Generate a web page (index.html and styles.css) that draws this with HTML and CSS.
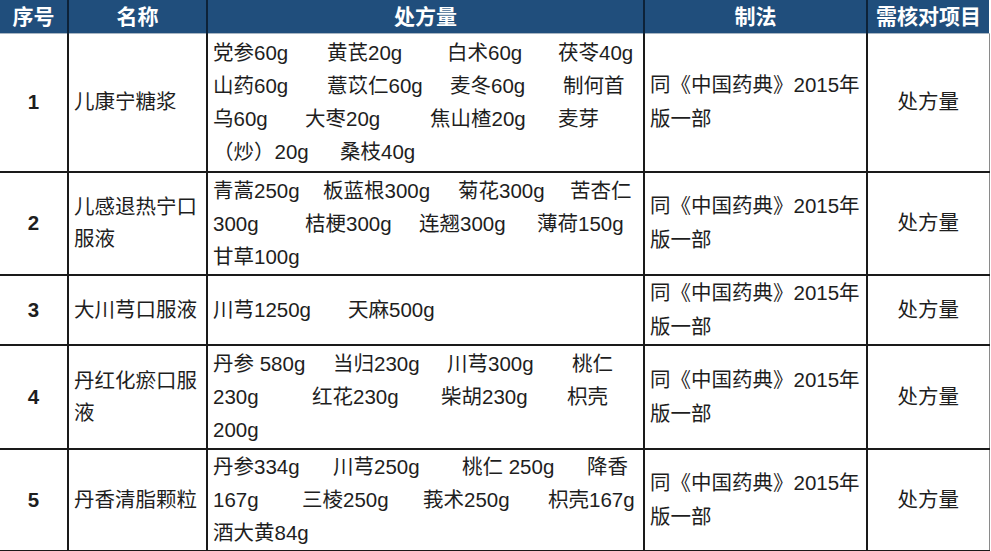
FILE: index.html
```html
<!DOCTYPE html>
<html lang="zh">
<head>
<meta charset="utf-8">
<link rel="stylesheet" href="styles.css">
</head>
<body>
<table class="rx">
  <colgroup>
    <col class="c-no"><col class="c-name"><col class="c-formula"><col class="c-method"><col class="c-check">
  </colgroup>
  <thead>
    <tr class="head">
      <th>序号</th><th>名称</th><th>处方量</th><th>制法</th><th>需核对项目</th>
    </tr>
  </thead>
  <tbody>
    <tr class="r1">
      <td class="no">1</td>
      <td class="name">儿康宁糖浆</td>
      <td class="formula">
        <div class="ln t11"><span>党参60g</span><span>黄芪20g</span><span>白术60g</span><span>茯苓40g</span></div>
        <div class="ln t12"><span>山药60g</span><span>薏苡仁60g</span><span>麦冬60g</span><span>制何首</span></div>
        <div class="ln t13"><span>乌60g</span><span>大枣20g</span><span>焦山楂20g</span><span>麦芽</span></div>
        <div class="ln t14"><span>（炒）20g</span><span>桑枝40g</span></div>
      </td>
      <td class="method">同《中国药典》2015年<br>版一部</td>
      <td class="check">处方量</td>
    </tr>
    <tr class="r2">
      <td class="no">2</td>
      <td class="name">儿感退热宁口服液</td>
      <td class="formula">
        <div class="ln t21"><span>青蒿250g</span><span>板蓝根300g</span><span>菊花300g</span><span>苦杏仁</span></div>
        <div class="ln t22"><span>300g</span><span>桔梗300g</span><span>连翘300g</span><span>薄荷150g</span></div>
        <div class="ln"><span>甘草100g</span></div>
      </td>
      <td class="method">同《中国药典》2015年<br>版一部</td>
      <td class="check">处方量</td>
    </tr>
    <tr class="r3">
      <td class="no">3</td>
      <td class="name">大川芎口服液</td>
      <td class="formula">
        <div class="ln t31"><span>川芎1250g</span><span>天麻500g</span></div>
      </td>
      <td class="method">同《中国药典》2015年<br>版一部</td>
      <td class="check">处方量</td>
    </tr>
    <tr class="r4">
      <td class="no">4</td>
      <td class="name">丹红化瘀口服液</td>
      <td class="formula">
        <div class="ln t41"><span>丹参 580g</span><span>当归230g</span><span>川芎300g</span><span>桃仁</span></div>
        <div class="ln t42"><span>230g</span><span>红花230g</span><span>柴胡230g</span><span>枳壳</span></div>
        <div class="ln"><span>200g</span></div>
      </td>
      <td class="method">同《中国药典》2015年<br>版一部</td>
      <td class="check">处方量</td>
    </tr>
    <tr class="r5">
      <td class="no">5</td>
      <td class="name">丹香清脂颗粒</td>
      <td class="formula">
        <div class="ln t51"><span>丹参334g</span><span>川芎250g</span><span>桃仁 250g</span><span>降香</span></div>
        <div class="ln t52"><span>167g</span><span>三棱250g</span><span>莪术250g</span><span>枳壳167g</span></div>
        <div class="ln"><span>酒大黄84g</span></div>
      </td>
      <td class="method">同《中国药典》2015年<br>版一部</td>
      <td class="check">处方量</td>
    </tr>
  </tbody>
</table>
</body>
</html>
```

FILE: styles.css
```css
html, body {
  margin: 0;
  padding: 0;
  background: #ffffff;
}
body {
  font-family: "Liberation Sans", "Noto Sans CJK SC", sans-serif;
  color: #1e1e1e;
}
.rx {
  border-collapse: collapse;
  table-layout: fixed;
  width: 989px;
  font-size: 20.5px;
}
.c-no { width: 68px; }
.c-name { width: 139px; }
.c-formula { width: 437px; }
.c-method { width: 223px; }
.c-check { width: 122px; }

.head th {
  background: #204e7c;
  color: #ffffff;
  font-weight: bold;
  font-size: 21px;
  height: 33px;
  padding: 0;
  line-height: 32px;
  text-align: center;
  border-left: 2px solid #0d2238;
  border-bottom: 1px solid #a9b6c3;
}
.head th:first-child { border-left: none; }

tbody td {
  border: 2px solid #1a1a1a;
  vertical-align: middle;
  padding: 0;
  line-height: 32px;
}
tbody td:first-child { border-left: none; }
tbody td:last-child { border-right: 1px solid #8a8a8a; }
tbody tr:first-child td { border-top: none; }

.r1 { height: 138px; }
.r2 { height: 103px; }
.r3 { height: 69px; }
.r4 { height: 104px; }
.r5 { height: 102px; }

.no {
  text-align: center;
  font-weight: bold;
}
.name {
  padding: 0 4px 0 5px !important;
  line-height: 32px;
}
.formula {
  padding: 0 4px 0 5px !important;
}
.ln {
  display: grid;
  grid-template-columns: auto;
  white-space: nowrap;
  line-height: 33px;
}
/* tab stops of each line, measured from the cell's text start */
.t11 { grid-template-columns: 114px 120px 111px auto; }
.t12 { grid-template-columns: 114px 123px 113px auto; }
.t13 { grid-template-columns: 92px 125px 128px auto; }
.t14 { grid-template-columns: 127px auto; }
.t21 { grid-template-columns: 110px 135px 112px auto; }
.t22 { grid-template-columns: 92px 114px 118px auto; }
.t31 { grid-template-columns: 135px auto; }
.t41 { grid-template-columns: 120px 114px 125px auto; }
.t42 { grid-template-columns: 99px 129px 126px auto; }
.t51 { grid-template-columns: 120px 129px 125px auto; }
.t52 { grid-template-columns: 89px 121px 125px auto; }

.method {
  padding: 0 4px 0 5px !important;
  line-height: 34px;
}
.check { text-align: center; }
```
